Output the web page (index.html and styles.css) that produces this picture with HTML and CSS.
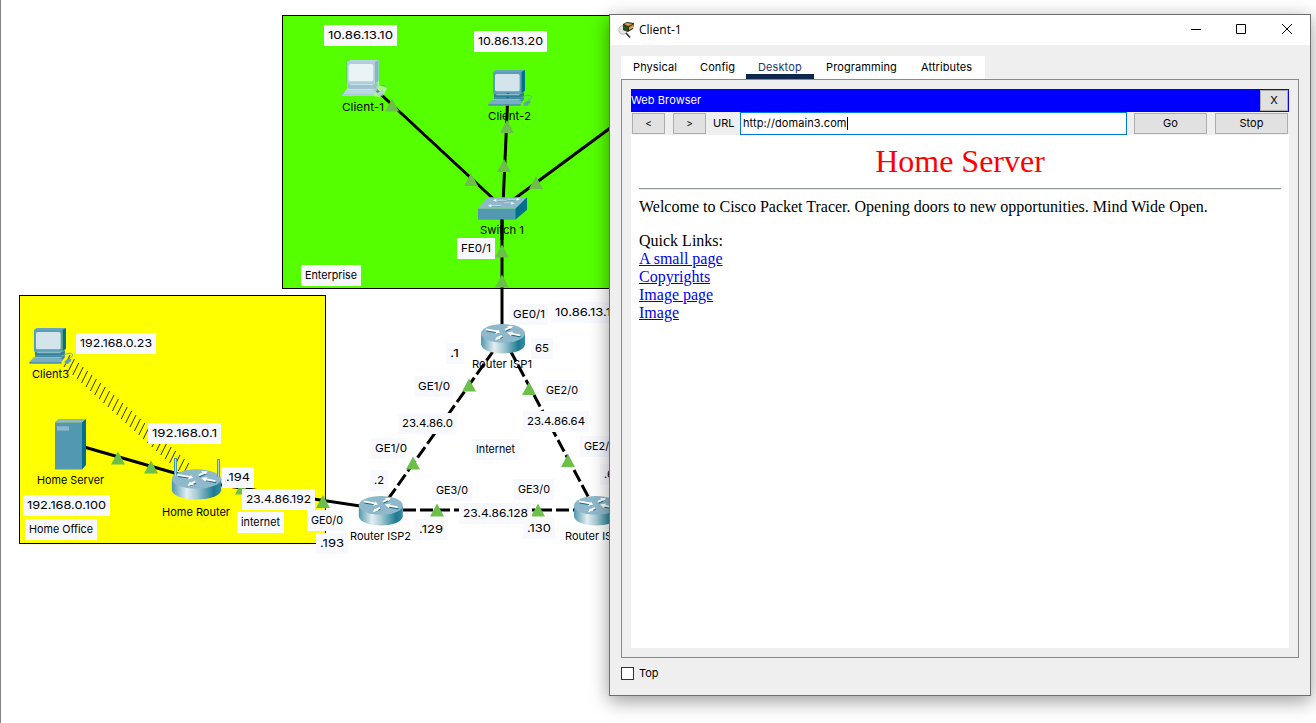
FILE: index.html
```html
<!DOCTYPE html>
<html lang="en">
<head>
<meta charset="utf-8">
<title>Client-1</title>
<link rel="stylesheet" href="styles.css">
</head>
<body>
<div class="workspace">
<svg class="topology" width="1316" height="723" viewBox="0 0 1316 723">
  <defs>
    <linearGradient id="metal"><stop offset="0" stop-color="#4f98ae"/><stop offset=".3" stop-color="#e4eef2"/><stop offset=".5" stop-color="#a9cbd6"/><stop offset=".85" stop-color="#1d7b92"/><stop offset="1" stop-color="#3a8ba2"/></linearGradient>
    <path id="up" class="status" d="M0 0L7 13H-7Z"/>
    <g id="router">
      <path fill="url(#metal)" d="M-22 0V11C-20 23 20 23 22 11V0Z"/>
      <ellipse rx="22" ry="9.4" fill="#8fb9ca"/>
      <g fill="none" stroke="#1b7189" stroke-width="1.5" transform="translate(.5 .8)"><path d="M-17-3.500L-5-1.500M2-3L8-6M17 2.500L7 .5M-1 3L-6 5.500"/></g>
      <g fill="none" stroke="#fff" stroke-width="1.800"><path d="M-17-4L-6-2M2-3.500L8-6.500M17 2L7 0M-1 2.500L-6 5"/></g>
      <path fill="#fff" d="M-3-1L-8 .5L-5-4ZM10-7.500L4-7.500L8-4.500ZM4-1L10-2L8 2.500ZM-8 6.500L-6 3L-2 5.500Z"/>
    </g>
    <g id="pc" transform="scale(.3333)">
      <path fill="#6ba5b9" d="M14 6L22 0H110L99 8H14Z"/>
      <path fill="#00708c" d="M99 6L110 0V62L99 71Z"/>
      <path fill="#5a9db4" d="M14 6H99V71H14Z"/>
      <rect x="20" y="12" width="74" height="52" rx="5" fill="#d3e4ea"/>
      <path fill="#317f97" d="M17 71H99L107 67V78L98 83H17Z"/>
      <path fill="#8dbccb" d="M22 72H96L92 76H25Z"/>
      <path fill="#438ba4" d="M18 83H100L107 79V88L99 98H12Z"/>
      <path fill="#8dbccb" d="M13 87H99L91 92H8Z"/>
      <path fill="#79adc1" d="M10 92H101L97 102H0Z"/>
      <path fill="#4f96ae" d="M0 102H97V107H0Z"/>
      <path fill="none" stroke="#69a3b8" stroke-width="3" d="M105 82C112 74 131 73 130 83C129 87 124 87 118 92"/>
      <path fill="#5f9eb4" d="M106 100L119 91L127 94L125 100L115 108H107Z"/>
    </g>
    <g id="switch" transform="scale(.3333)">
      <path fill="#8fb9ca" d="M28 0H147L112 34H0Z"/>
      <path fill="#5298b1" d="M0 34H112V67H0Z"/>
      <path fill="#00708c" d="M112 34L147 0V37L112 67Z"/>
      <g stroke="#5f9bb1" stroke-width="3"><path d="M59 11H83M87 8H113M76 19H97M41 27H68"/></g>
      <g stroke="#d4e5eb" stroke-width="2.500"><path d="M57 9H84M88 6H118M77 17H100M40 25H69"/></g>
      <path fill="#fff" d="M45 9L55 5V13ZM126 5L116 1V10ZM110 18L100 14V22ZM30 25L40 21V29Z"/>
    </g>
  </defs>

  <rect class="zone enterprise" x="282.5" y="15.5" width="500" height="273"/>
  <rect class="zone home" x="19.5" y="295.500" width="306" height="248"/>

  <g class="link">
    <path d="M374 88L500 205M508 92L503 205M640 106L510 202M502 215V325M84 447L185 476M215 484L380 509"/>
    <path class="serial" d="M494 350L386 502"/>
    <path class="serial" d="M510 350L590 500"/>
    <path class="serial" d="M403 510H575"/>
  </g>
  <path class="wireless" d="M70 355l-6 12m10.400-8l-6 12m10.400-8l-6 12m10.400-8l-6 12m10.400-8l-6 12m10.400-8l-6 12m10.400-8l-6 12m10.400-8l-6 12m10.400-8l-6 12m10.400-8l-6 12m10.400-8l-6 12m10.400-8l-6 12m10.400-8l-6 12m10.400-8l-6 12m10.400-8l-6 12m10.400-8l-6 12m10.400-8l-6 12m10.400-8l-6 12m10.400-8l-6 12m10.400-8l-6 12m10.400-8l-6 12m10.400-8l-6 12m10.400-8l-6 12m10.400-8l-6 12m10.400-8l-6 12m10.400-8l-6 12m10.400-8l-6 12m10.400-8l-6 12"/>

  <use href="#pc" transform="translate(342 60)"/>
  <path class="veil" d="M342 95L347 89V62L350 60H379V85L387 88L385 92L383 96L378 97L374 96H342Z"/>
  <use href="#pc" transform="translate(488.300 70)"/>
  <use href="#pc" transform="translate(29.300 328)"/>
  <use href="#switch" transform="translate(478 197.300)"/>
  <path class="link" d="M502 219.500V240"/>
  <g><path fill="#5298b1" d="M55 422.300H82V469.600H55Z"/><path fill="#8fb9ca" d="M55 422.300L58.300 419H86L82 422.300Z"/><path fill="#00708c" d="M82 422.300L86 419V465L82 469.600Z"/><path fill="#8fb9ca" d="M57 426.300H69V430.600H57Z"/></g>
  <use href="#router" x="503" y="333.400"/>
  <use href="#router" x="380.800" y="505.400"/>
  <use href="#router" x="596" y="505.400"/>
  <use href="#router" transform="translate(196.500 479) scale(1.12 1.03)"/>
  <path stroke="#4e98af" stroke-width="3" d="M175.500 458V475M218.500 459V477"/><path stroke="#b8d5df" d="M175.500 459V476M218.500 460V477"/>

  <g>
    <g><use href="#up" x="392" y="98.500"/><use href="#up" x="507" y="120"/><use href="#up" x="471" y="173"/><use href="#up" x="504" y="159"/><use href="#up" x="536" y="176"/><use href="#up" x="502" y="244.500"/><use href="#up" x="502" y="274.500"/></g>
    <use href="#up" x="469" y="378.500"/><use href="#up" x="529" y="382"/><use href="#up" x="413" y="456.500"/><use href="#up" x="568" y="454"/><use href="#up" x="437" y="503.500"/><use href="#up" x="538" y="503.500"/><use href="#up" x="118" y="451.500"/><use href="#up" x="151" y="460.500"/><use href="#up" x="242" y="481.500"/><use href="#up" x="323" y="495"/>
  </g>

  <g class="note-bg">
    <rect x="324" y="25" width="73" height="21"/><rect x="474" y="31" width="73" height="21"/><rect x="457" y="238" width="38" height="21"/><rect x="301" y="265" width="60" height="21"/>
    <rect x="509" y="304" width="39" height="21"/><rect x="551" y="302" width="73" height="21"/><rect x="531" y="338" width="22" height="21"/><rect x="446" y="343" width="18" height="21"/>
    <rect x="414" y="376" width="39" height="21"/><rect x="542" y="380" width="40" height="21"/><rect x="398" y="413" width="59" height="21"/><rect x="523" y="411" width="66" height="21"/>
    <rect x="371" y="438" width="35" height="21"/><rect x="472" y="439" width="47" height="21"/><rect x="580" y="436" width="40" height="21"/><rect x="370" y="470" width="18" height="21"/><rect x="600" y="464" width="22" height="21"/>
    <rect x="432" y="480" width="40" height="21"/><rect x="514" y="479" width="40" height="21"/><rect x="459" y="503" width="73" height="21"/><rect x="415" y="519" width="32" height="21"/><rect x="523" y="518" width="32" height="21"/>
    <rect x="76" y="333" width="80" height="21"/><rect x="148" y="423" width="73" height="21"/><rect x="23" y="495" width="87" height="21"/><rect x="25" y="519" width="72" height="21"/>
    <rect x="222" y="467" width="32" height="21"/><rect x="242" y="489" width="73" height="21"/><rect x="237" y="512" width="47" height="21"/><rect x="307" y="510" width="39" height="21"/><rect x="316" y="533" width="32" height="21"/>
  </g>
  <g class="label">
    <text x="328" y="39" textLength="65" lengthAdjust="spacingAndGlyphs">10.86.13.10</text><text x="478" y="45" textLength="65" lengthAdjust="spacingAndGlyphs">10.86.13.20</text>
    <text x="342" y="111" textLength="42" lengthAdjust="spacingAndGlyphs">Client-1</text><text x="488" y="120" textLength="43" lengthAdjust="spacingAndGlyphs">Client-2</text>
    <text x="480" y="234" textLength="44" lengthAdjust="spacingAndGlyphs">Switch 1</text><text x="461" y="252" textLength="30" lengthAdjust="spacingAndGlyphs">FE0/1</text><text x="305" y="279" textLength="52" lengthAdjust="spacingAndGlyphs">Enterprise</text>
    <text x="513" y="318" textLength="32" lengthAdjust="spacingAndGlyphs">GE0/1</text><text x="555" y="316" textLength="56" lengthAdjust="spacingAndGlyphs">10.86.13.1</text><text x="535" y="352" textLength="14" lengthAdjust="spacingAndGlyphs">65</text><text x="450" y="357" textLength="9" lengthAdjust="spacingAndGlyphs">.1</text>
    <text x="472" y="368" textLength="60" lengthAdjust="spacingAndGlyphs">Router ISP1</text><text x="418" y="390" textLength="32" lengthAdjust="spacingAndGlyphs">GE1/0</text><text x="546" y="394" textLength="32" lengthAdjust="spacingAndGlyphs">GE2/0</text>
    <text x="402" y="427" textLength="51" lengthAdjust="spacingAndGlyphs">23.4.86.0</text><text x="527" y="425" textLength="58" lengthAdjust="spacingAndGlyphs">23.4.86.64</text><text x="375" y="452" textLength="32" lengthAdjust="spacingAndGlyphs">GE1/0</text><text x="476" y="453" textLength="39" lengthAdjust="spacingAndGlyphs">Internet</text>
    <text x="584" y="450" textLength="32" lengthAdjust="spacingAndGlyphs">GE2/0</text><text x="374" y="484" textLength="10" lengthAdjust="spacingAndGlyphs">.2</text><text x="604" y="478">.6</text><text x="436" y="494" textLength="32" lengthAdjust="spacingAndGlyphs">GE3/0</text><text x="518" y="493" textLength="32" lengthAdjust="spacingAndGlyphs">GE3/0</text>
    <text x="463" y="517" textLength="65" lengthAdjust="spacingAndGlyphs">23.4.86.128</text><text x="419" y="533" textLength="24" lengthAdjust="spacingAndGlyphs">.129</text><text x="527" y="532" textLength="24" lengthAdjust="spacingAndGlyphs">.130</text>
    <text x="350" y="540" textLength="61" lengthAdjust="spacingAndGlyphs">Router ISP2</text><text x="565" y="540" textLength="61" lengthAdjust="spacingAndGlyphs">Router ISP3</text>
    <text x="80" y="347" textLength="72" lengthAdjust="spacingAndGlyphs">192.168.0.23</text><text x="32" y="378" textLength="37" lengthAdjust="spacingAndGlyphs">Client3</text><text x="152" y="437" textLength="65" lengthAdjust="spacingAndGlyphs">192.168.0.1</text>
    <text x="37" y="484" textLength="67" lengthAdjust="spacingAndGlyphs">Home Server</text><text x="27" y="509" textLength="79" lengthAdjust="spacingAndGlyphs">192.168.0.100</text><text x="29" y="533" textLength="64" lengthAdjust="spacingAndGlyphs">Home Office</text><text x="162" y="516" textLength="68" lengthAdjust="spacingAndGlyphs">Home Router</text>
    <text x="226" y="481" textLength="24" lengthAdjust="spacingAndGlyphs">.194</text><text x="246" y="503" textLength="65" lengthAdjust="spacingAndGlyphs">23.4.86.192</text><text x="241" y="526" textLength="39" lengthAdjust="spacingAndGlyphs">internet</text><text x="311" y="524" textLength="32" lengthAdjust="spacingAndGlyphs">GE0/0</text><text x="320" y="547" textLength="24" lengthAdjust="spacingAndGlyphs">.193</text>
  </g>
</svg>

<section class="window">
  <header class="titlebar">
    <svg class="app-icon" width="17" height="17" viewBox="0 0 17 17"><circle cx="5" cy="8" r="4.300" fill="#e4e4e0" stroke="#bbb"/><path fill="#30271b" d="M5 2L9 0L16 1L15 7L10 10L5 8Z"/><path fill="#d9a44c" d="M6 2L9 1L15 2L10 4ZM11 5L15 3V6L11 8Z"/><path fill="#195c1c" d="M5 3L10 5V10L7 7L5 8Z"/><path stroke="#333" stroke-width="1.600" d="M8 11L12 15.500"/></svg>
    <span class="window-title">Client-1</span>
    <svg class="controls" width="104" height="12" viewBox="0 0 104 12"><path d="M1 6.500H11M46.500 1.500H55.500V10.500H46.500ZM92 1L102 11M102 1L92 11"/></svg>
  </header>
  <nav class="tabs"><span class="tab physical">Physical</span><span class="tab config">Config</span><span class="tab desktop active">Desktop</span><span class="tab programming">Programming</span><span class="tab attributes">Attributes</span></nav>
  <main class="panel">
    <div class="app-bar"><span class="app-name">Web Browser</span><span class="button close">X</span></div>
    <div class="toolbar"><span class="button arrow">&lt;</span><span class="button arrow">&gt;</span><span class="url-label">URL</span><div class="url"><span>http://domain3.com</span><i class="caret"></i></div><span class="button wide">Go</span><span class="button wide">Stop</span></div>
    <article class="page">
      <h1>Home Server</h1>
      <hr>
      <p class="welcome">Welcome to Cisco Packet Tracer. Opening doors to new opportunities. Mind Wide Open.</p>
      <p class="links">Quick Links:<br><a href="#">A small page</a><br><a href="#">Copyrights</a><br><a href="#">Image page</a><br><a href="#">Image</a></p>
    </article>
  </main>
  <footer class="footer"><span class="checkbox"></span><span>Top</span></footer>
</section>
</div>
</body>
</html>
```
FILE: styles.css
```css
* { box-sizing: border-box; }
body { margin: 0; background: #fff; font: 11px Inter, "Liberation Sans", sans-serif; color: #000; overflow: hidden; }
.workspace { position: relative; width: 1316px; height: 723px; overflow: hidden; border-left: 1px solid #85858f; }
.topology { position: absolute; left: -1px; top: 0; clip-path: inset(0 0 0 1px); }
.zone { stroke: #000; stroke-width: 1; }
.enterprise { fill: #5f0; }
.home { fill: #ff0; }
.link { fill: none; stroke: #000; stroke-width: 3; }
.serial { stroke-dasharray: 13 4; }
.wireless { fill: none; stroke: #000; stroke-opacity: .8; stroke-width: 1; }
.status { fill: #6cc04a; }
.veil { fill: #fff; fill-opacity: .5; }
.note-bg { fill: #f8f8ff; }
.label { font-size: 11px; }

.window { position: absolute; left: 608px; top: 14px; width: 702px; height: 682px; border: 1px solid #6e6e6e; background: #efefef; box-shadow: 0 5px 18px rgba(0,0,0,.4); display: flex; flex-direction: column; }
.titlebar { height: 30px; background: #fff; display: flex; align-items: center; padding-left: 8px; }
.window-title { margin: 0 0 2px 4px; font: 12px "Open Sans", "Noto Sans", sans-serif; }
.controls { margin-left: auto; margin-right: 16px; margin-bottom: 2px; fill: none; stroke: #000; stroke-width: 1; }
.tabs { display: flex; width: 364px; height: 23px; margin: 11px 0 0 11px; background: #fff; }
.tab { padding-left: 12px; line-height: 23px; white-space: nowrap; letter-spacing: .1px; }
.physical { width: 67px; }
.config { width: 58px; }
.desktop { width: 68px; }
.programming { width: 95px; }
.attributes { width: 76px; }
.active { color: #24396b; border-bottom: 5px solid #0d274d; }
.panel { width: 678px; height: 579px; margin-left: 11px; padding: 9px; border: 1px solid #868894; }
.app-bar { height: 23px; padding-right: 1px; background: #00f; color: #fff; display: flex; align-items: center; justify-content: space-between; }
.app-name { padding-bottom: 2px; letter-spacing: .08px; }
.button { height: 21px; border: 1px solid #adadad; background: #e1e1e1; color: #000; line-height: 19px; text-align: center; }
.close { width: 28px; }
.toolbar { height: 23px; display: flex; align-items: center; padding: 0 1px; }
.arrow { width: 33px; margin-right: 8px; font-size: 10px; }
.url-label { width: 26px; margin-left: -1px; padding-bottom: 1px; }
.url { width: 387px; height: 23px; margin: 0 7px 0 1px; padding: 0 0 1px 2px; border: 1px solid #0078d7; background: #fff; display: flex; align-items: center; letter-spacing: .1px; }
.caret { width: 1px; height: 13px; background: #000; }
.wide { width: 73px; }
.wide + .wide { margin-left: 8px; }
.page { height: 513px; padding: 8px; background: #fff; font: 16px/18px "Liberation Serif", "Times New Roman", serif; }
.page h1 { margin: 0; color: #f00; font-weight: 400; font-size: 32px; line-height: 36px; text-align: center; }
.page hr { height: 2px; margin: 9px 0 8px; border: 0; border-top: 1px solid #8f9494; background: #e8e8e8; }
.page p { margin: 0 0 16px; }
.page a { color: #00e; }
.footer { display: flex; align-items: center; margin: 8px 0 0 11px; height: 14px; }
.checkbox { width: 13px; height: 13px; margin-right: 5px; border: 1px solid #333; background: #fff; }
```
